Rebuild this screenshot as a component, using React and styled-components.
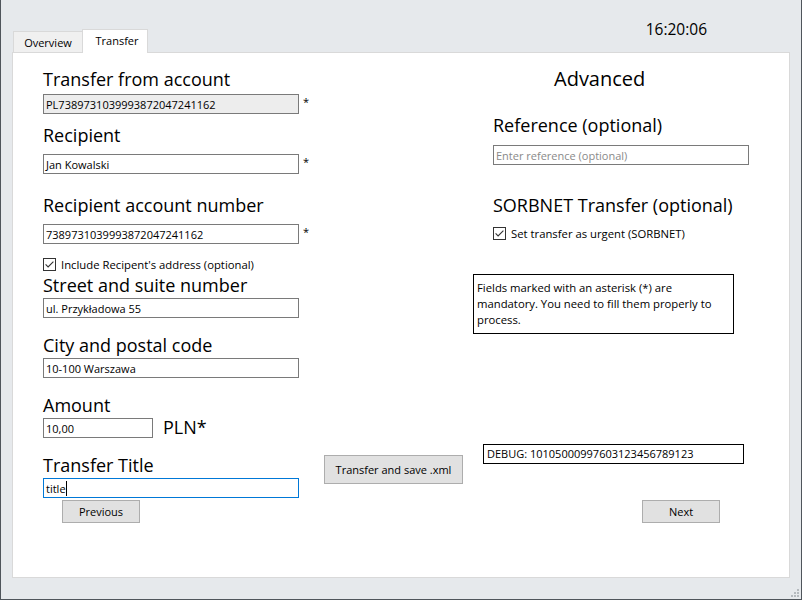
import React from "react";
import styled, { createGlobalStyle } from "styled-components";

const GlobalStyle = createGlobalStyle`
  html, body { margin: 0; padding: 0; background: #e6e9ec; }
  body { font-family: "Open Sans", "Noto Sans", sans-serif; color: #000; }
  *, *::before, *::after { box-sizing: border-box; }
`;

const Window = styled.div`
  position: relative;
  width: 802px;
  height: 600px;
  background: #e6e9ec;
  border-left: 1px solid #4f555b;
  border-right: 1px solid #4f555b;
  border-bottom: 1px solid #4f555b;
  display: flex;
  flex-direction: column;
`;

const Header = styled.div`
  height: 52px;
  display: flex;
  align-items: flex-end;
  padding-left: 12px;
  flex-shrink: 0;
`;

const Tab = styled.div`
  position: relative;
  width: ${(p) => p.$w}px;
  height: ${(p) => (p.$active ? 24 : 21)}px;
  margin-bottom: ${(p) => (p.$active ? -1 : 0)}px;
  margin-left: ${(p) => (p.$active ? -1 : 0)}px;
  z-index: ${(p) => (p.$active ? 2 : 1)};
  background: ${(p) => (p.$active ? "#ffffff" : "#f0f0f0")};
  border: 1px solid #d9d9d9;
  border-bottom: none;
  padding-top: 3px;
  padding-left: ${(p) => (p.$active ? 4 : 0)}px;
  text-align: center;
  font-size: 11px;
  line-height: 16px;
`;

const Clock = styled.div`
  align-self: flex-start;
  margin: 19px 94px 0 auto;
  font-size: 15.5px;
  line-height: 20px;
`;

const Page = styled.div`
  position: relative;
  height: 526px;
  margin: 0 11px;
  background: #ffffff;
  border: 1px solid #d9d9d9;
  display: flex;
  padding-left: 30px;
  flex-shrink: 0;
`;

const Column = styled.div`
  width: ${(p) => p.$w}px;
  margin-left: ${(p) => p.$ml || 0}px;
  padding-top: ${(p) => p.$pt}px;
  display: flex;
  flex-direction: column;
  align-items: flex-start;
`;

const FieldLabel = styled.div`
  font-size: ${(p) => (p.$big ? 20 : 18)}px;
  line-height: ${(p) => (p.$big ? 26 : 22)}px;
  height: ${(p) => (p.$big ? 26 : 22)}px;
  margin-top: ${(p) => p.$mt || 0}px;
  margin-left: ${(p) => p.$ml || 0}px;
  white-space: nowrap;
`;

const InputRow = styled.div`
  display: flex;
  align-items: flex-start;
  gap: ${(p) => (p.$gap ? p.$gap : 4)}px;
  margin-top: ${(p) => p.$mt || 0}px;
  margin-left: ${(p) => p.$ml || 0}px;
`;

const TextBox = styled.div`
  width: ${(p) => p.$w || 256}px;
  height: 20px;
  border: 1px solid ${(p) => (p.$focused ? "#0078d7" : "#7a7a7a")};
  background: ${(p) => (p.$readOnly ? "#ededed" : "#ffffff")};
  color: ${(p) => (p.$placeholder ? "#8a8a8a" : "#000000")};
  padding: 2px 2px 0;
  font-size: 11px;
  line-height: 16px;
  white-space: nowrap;
  overflow: hidden;
`;

const Caret = styled.span`
  display: inline-block;
  width: 1px;
  height: 15px;
  background: #000;
  vertical-align: -3px;
`;

const Asterisk = styled.span`
  font-size: 11px;
  line-height: 16px;
`;

const Unit = styled.span`
  font-size: 18px;
  line-height: 22px;
  margin-top: -2px;
`;

const CheckRow = styled.div`
  display: flex;
  align-items: center;
  gap: 5px;
  height: 13px;
  font-size: 11.3px;
  line-height: 13px;
  margin-top: ${(p) => p.$mt || 0}px;
  margin-left: ${(p) => p.$ml || 0}px;
  white-space: nowrap;
`;

const Button = styled.button`
  width: ${(p) => p.$w}px;
  height: ${(p) => p.$h}px;
  margin-top: ${(p) => p.$mt || 0}px;
  margin-left: ${(p) => p.$ml || 0}px;
  background: #e1e1e1;
  border: 1px solid #adadad;
  padding: 0;
  font-family: inherit;
  font-size: 11px;
  line-height: 16px;
  color: #000;
  cursor: default;
`;

const InfoBox = styled.div`
  width: 261px;
  height: 60px;
  border: 1px solid #000;
  padding: 5px 3px 0;
  font-size: 11.3px;
  line-height: 16px;
  white-space: nowrap;
  margin-top: ${(p) => p.$mt || 0}px;
  margin-left: ${(p) => p.$ml || 0}px;
`;

const DebugBox = styled.div`
  width: 261px;
  height: 20px;
  border: 1px solid #000;
  padding: 1px 3px 0;
  font-size: 11px;
  line-height: 16px;
  white-space: nowrap;
  margin-top: ${(p) => p.$mt || 0}px;
  margin-left: ${(p) => p.$ml || 0}px;
`;

const Grip = styled.svg`
  position: absolute;
  right: 2px;
  bottom: 2px;
`;

const CheckBox = () => (
  <svg width="13" height="13" viewBox="0 0 13 13">
    <rect x="0.5" y="0.5" width="12" height="12" fill="#fff" stroke="#333" />
    <polyline points="2.6,6.4 5.1,8.9 10.4,3.6" fill="none" stroke="#333" strokeWidth="1.1" />
  </svg>
);

export default function App() {
  return (
    <>
      <GlobalStyle />
      <Window>
        <Header>
          <Tab $w={70}>Overview</Tab>
          <Tab $w={66} $active>Transfer</Tab>
          <Clock>16:20:06</Clock>
        </Header>
        <Page>
          <Column $w={270} $pt={15}>
            <FieldLabel>Transfer from account</FieldLabel>
            <InputRow $mt={4}>
              <TextBox $readOnly>PL7389731039993872047241162</TextBox>
              <Asterisk>*</Asterisk>
            </InputRow>

            <FieldLabel $mt={10}>Recipient</FieldLabel>
            <InputRow $mt={8}>
              <TextBox>Jan Kowalski</TextBox>
              <Asterisk>*</Asterisk>
            </InputRow>

            <FieldLabel $mt={20}>Recipient account number</FieldLabel>
            <InputRow $mt={8}>
              <TextBox>7389731039993872047241162</TextBox>
              <Asterisk>*</Asterisk>
            </InputRow>

            <CheckRow $mt={14}>
              <CheckBox />
              <span>Include Recipent's address (optional)</span>
            </CheckRow>

            <FieldLabel $mt={3}>Street and suite number</FieldLabel>
            <InputRow $mt={2}>
              <TextBox>ul. Przykładowa 55</TextBox>
            </InputRow>

            <FieldLabel $mt={16}>City and postal code</FieldLabel>
            <InputRow $mt={2}>
              <TextBox>10-100 Warszawa</TextBox>
            </InputRow>

            <FieldLabel $mt={16}>Amount</FieldLabel>
            <InputRow $mt={2} $gap={10}>
              <TextBox $w={110}>10,00</TextBox>
              <Unit>PLN*</Unit>
            </InputRow>

            <FieldLabel $mt={16}>Transfer Title</FieldLabel>
            <InputRow $mt={2}>
              <TextBox $focused>
                title<Caret />
              </TextBox>
            </InputRow>

            <Button $w={78} $h={23} $mt={2} $ml={19}>
              Previous
            </Button>
          </Column>

          <Column $w={139} $ml={11} $pt={402}>
            <Button $w={139} $h={29}>
              Transfer and save .xml
            </Button>
          </Column>

          <Column $w={277} $ml={10} $pt={13}>
            <FieldLabel $big $ml={81}>Advanced</FieldLabel>
            <FieldLabel $mt={22} $ml={20}>Reference (optional)</FieldLabel>
            <InputRow $mt={9} $ml={20}>
              <TextBox $placeholder>Enter reference (optional)</TextBox>
            </InputRow>
            <FieldLabel $mt={29} $ml={20}>SORBNET Transfer (optional)</FieldLabel>
            <CheckRow $mt={11} $ml={20}>
              <CheckBox />
              <span>Set transfer as urgent (SORBNET)</span>
            </CheckRow>
            <InfoBox $mt={34}>
              Fields marked with an asterisk (*) are
              <br />
              mandatory. You need to fill them properly to
              <br />
              process.
            </InfoBox>
            <DebugBox $mt={110} $ml={10}>DEBUG: 10105000997603123456789123</DebugBox>
            <Button $w={78} $h={23} $mt={36} $ml={169}>
              Next
            </Button>
          </Column>
        </Page>
        <Grip width="9" height="9" viewBox="0 0 9 9">
          <rect x="7" y="1" width="2" height="2" fill="#b5babe" />
          <rect x="4" y="4" width="2" height="2" fill="#b5babe" />
          <rect x="7" y="4" width="2" height="2" fill="#b5babe" />
          <rect x="1" y="7" width="2" height="2" fill="#b5babe" />
          <rect x="4" y="7" width="2" height="2" fill="#b5babe" />
          <rect x="7" y="7" width="2" height="2" fill="#b5babe" />
        </Grip>
      </Window>
    </>
  );
}
